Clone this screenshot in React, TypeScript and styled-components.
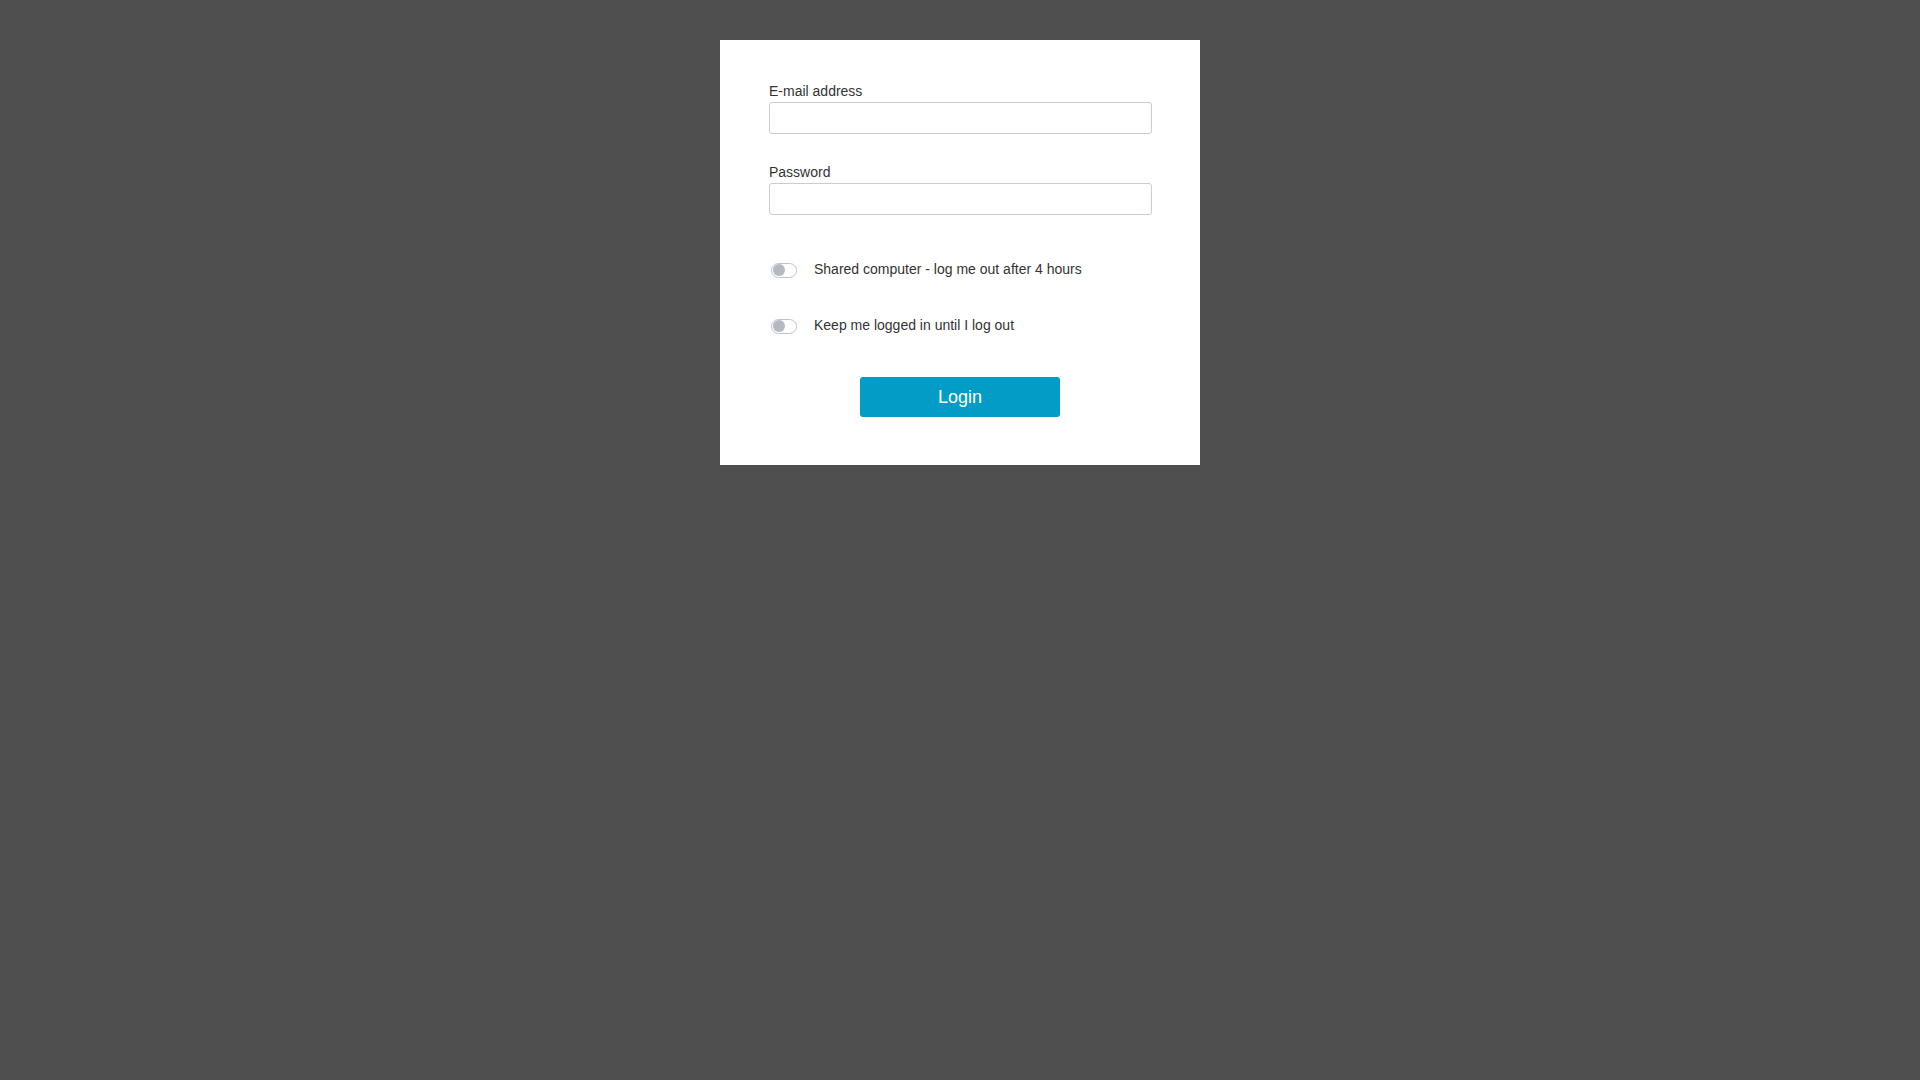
import React from "react";
import styled, { createGlobalStyle } from "styled-components";

const GlobalStyle = createGlobalStyle`
  html, body {
    margin: 0;
    padding: 0;
    background: #4f4f4f;
    font-family: "Liberation Sans", Arial, sans-serif;
  }
  body {
    min-height: 100vh;
  }
`;

const Page = styled.div`
  display: flex;
  justify-content: center;
  padding-top: 40px;
`;

const Card = styled.form`
  width: 480px;
  box-sizing: border-box;
  background: #ffffff;
  padding: 43px 48px 48px;
  display: flex;
  flex-direction: column;
`;

const Field = styled.div<{ $gap?: number }>`
  display: flex;
  flex-direction: column;
  padding-left: 1px;
  margin-top: ${(p) => p.$gap ?? 0}px;
`;

const Label = styled.label`
  font-size: 14px;
  line-height: 16px;
  color: #333333;
  margin-bottom: 3px;
`;

const Input = styled.input`
  box-sizing: border-box;
  width: 100%;
  height: 32px;
  border: 1px solid #c8ced4;
  border-radius: 3px;
  background: #ffffff;
  padding: 0 8px;
  font-family: "Liberation Sans", Arial, sans-serif;
  font-size: 14px;
  outline: none;
`;

const ToggleRow = styled.label<{ $gap: number }>`
  display: flex;
  align-items: center;
  height: 16px;
  margin-top: ${(p) => p.$gap}px;
  padding-left: 3px;
  gap: 17px;
  font-size: 14px;
  line-height: 16px;
  color: #333333;
  cursor: pointer;
`;

const ToggleText = styled.span`
  padding-bottom: 2px;
`;

const Track = styled.span`
  position: relative;
  flex: none;
  box-sizing: border-box;
  width: 26px;
  height: 15px;
  border: 1px solid #bcc3ca;
  border-radius: 8px;
  background: #ffffff;
`;

const Knob = styled.span`
  position: absolute;
  left: 1px;
  top: 0.5px;
  width: 12px;
  height: 12px;
  border-radius: 50%;
  background: #b2b9c1;
`;

const ButtonRow = styled.div`
  display: flex;
  justify-content: center;
  margin-top: 43px;
`;

const LoginButton = styled.button`
  width: 200px;
  height: 40px;
  border: none;
  border-radius: 3px;
  background: #039cc6;
  color: #ffffff;
  font-family: "Liberation Sans", Arial, sans-serif;
  font-size: 18px;
  cursor: pointer;
`;

const Toggle: React.FC<{ label: string; gap: number }> = ({ label, gap }) => (
  <ToggleRow $gap={gap}>
    <Track>
      <Knob />
    </Track>
    <ToggleText>{label}</ToggleText>
  </ToggleRow>
);

export default function App() {
  return (
    <>
      <GlobalStyle />
      <Page>
        <Card onSubmit={(e) => e.preventDefault()}>
          <Field>
            <Label>E-mail address</Label>
            <Input type="email" />
          </Field>
          <Field $gap={30}>
            <Label>Password</Label>
            <Input type="password" />
          </Field>
          <Toggle label="Shared computer - log me out after 4 hours" gap={47} />
          <Toggle label="Keep me logged in until I log out" gap={40} />
          <ButtonRow>
            <LoginButton type="submit">Login</LoginButton>
          </ButtonRow>
        </Card>
      </Page>
    </>
  );
}
